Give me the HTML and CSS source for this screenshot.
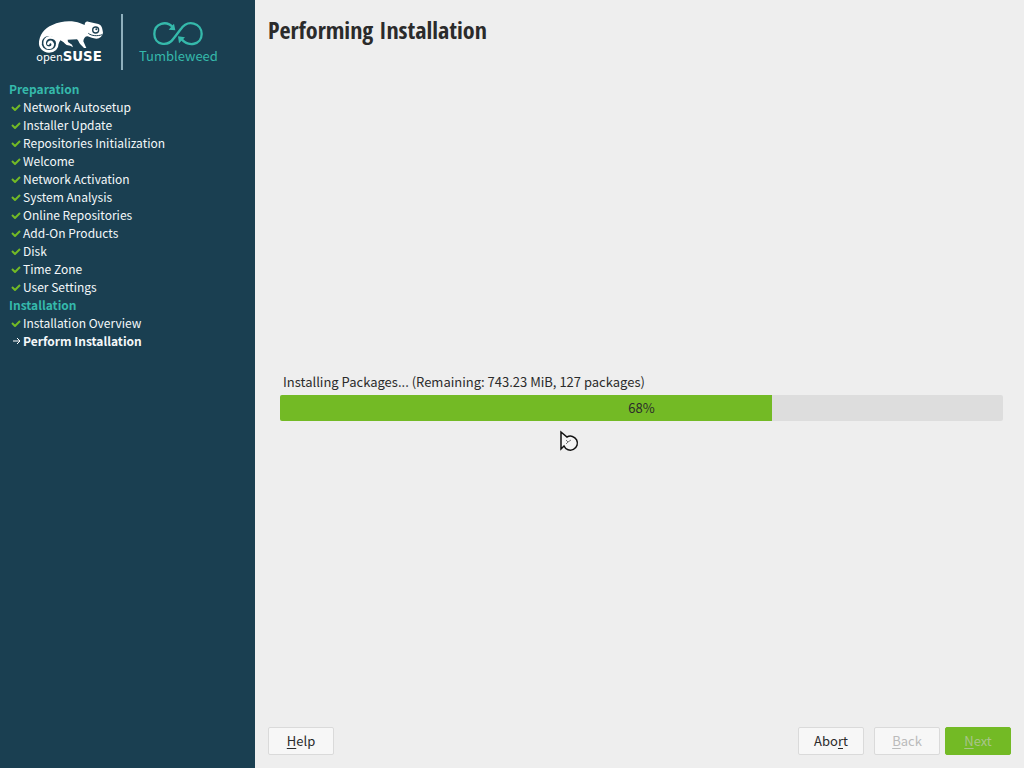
FILE: index.html
```html
<!DOCTYPE html>
<html lang="en">
<head>
  <meta charset="UTF-8" />
  <meta name="viewport" content="width=device-width, initial-scale=1.0"/>
  <title>Performing Installation</title>
  <link rel="stylesheet" href="styles.css">
</head>
<body>

  <!-- Sidebar -->
  <aside class="sidebar">
    <div class="logos">
      <svg class="logo-suse" viewBox="0 0 210 168" role="img" aria-label="openSUSE">
        <path class="suse-body" d="M12 82 C12 58 28 36 52 27 C78 15 110 12 136 22 L149 27 C149 20 153 15 160 17 L190 24 C199 27 202 34 204 50 C202 61 195 67 184 68 C174 68 166 64 158 61 C150 61 146 67 145 76 L154 96 L147 96 L136 85 C131 80 132 75 126 70 L98 71 L99 78 L111 86 L114 94 L106 89 L95 87 C88 82 84 76 76 73 L70 84 C66 66 52 60 40 60 C28 62 20 70 20 84 Z"/>
        <path class="suse-tail" d="M16 78 C14 94 26 106 42 106 C58 106 67 96 67 82 C67 70 56 63 44 64 C33 65 28 75 29 83 C30 93 38 96 45 95 C52 94 56 85 51 80 C47 76 41 78 40 83"/>
        <circle class="suse-eye" cx="182" cy="42" r="11"/>
        <circle class="suse-ring" cx="182" cy="42" r="7"/>
        <path class="suse-mouth" d="M160 52 C170 60 187 61 202 56"/>
        <circle class="suse-pupil" cx="184" cy="40" r="3"/>
        <text class="suse-name" x="4" y="134"><tspan class="thin">open</tspan><tspan class="bold">SUSE</tspan></text>
      </svg>
      <div class="product">
        <svg class="logo-loop" viewBox="0 0 150 76" aria-hidden="true">
          <path d="M61 19 C40 -5 4 6 4 38 C4 70 43 79 63 50 L83 24 C104 -8 146 5 146 38 C146 70 106 80 83 50"/>
          <path class="tip" d="M67 27 L47 25 L63 7 Z M75 45 L96 48 L78 66 Z"/>
        </svg>
        <span>Tumbleweed</span>
      </div>
    </div>

    <!-- Check mark and arrow used by the steps -->
    <svg class="symbols" aria-hidden="true">
      <symbol id="check" viewBox="0 0 10 8"><path d="M1 4 L4 7 L9 2"/></symbol>
      <symbol id="arrow" viewBox="0 0 10 8"><path d="M2 4 H8 M6 1 L9 4 L6 7"/></symbol>
    </svg>

    <h2>Preparation</h2>
    <ul class="steps">
      <li><svg><use href="#check"/></svg>Network Autosetup</li>
      <li><svg><use href="#check"/></svg>Installer Update</li>
      <li><svg><use href="#check"/></svg>Repositories Initialization</li>
      <li><svg><use href="#check"/></svg>Welcome</li>
      <li><svg><use href="#check"/></svg>Network Activation</li>
      <li><svg><use href="#check"/></svg>System Analysis</li>
      <li><svg><use href="#check"/></svg>Online Repositories</li>
      <li><svg><use href="#check"/></svg>Add-On Products</li>
      <li><svg><use href="#check"/></svg>Disk</li>
      <li><svg><use href="#check"/></svg>Time Zone</li>
      <li><svg><use href="#check"/></svg>User Settings</li>
    </ul>
    <h2>Installation</h2>
    <ul class="steps">
      <li><svg><use href="#check"/></svg>Installation Overview</li>
      <li class="current"><svg><use href="#arrow"/></svg>Perform Installation</li>
    </ul>
  </aside>

  <!-- Main area -->
  <main class="main">
    <h1>Performing Installation</h1>

    <section class="content">
      <div class="install-progress">
        <label for="progress">Installing Packages... (Remaining: 743.23 MiB, 127 packages)</label>
        <div class="bar">
          <progress id="progress" value="68" max="100"></progress>
          <span class="percent">68%</span>
        </div>
      </div>
    </section>

    <footer class="buttons">
      <button type="button" class="help"><u>H</u>elp</button>
      <button type="button" class="abort">Abo<u>r</u>t</button>
      <button type="button" class="back" disabled><u>B</u>ack</button>
      <button type="button" class="next" disabled><u>N</u>ext</button>
    </footer>
  </main>

  <!-- Busy pointer -->
  <svg class="pointer" viewBox="0 0 20 22" aria-hidden="true">
    <path d="M2 2 V19 L5 16 A7 7 0 1 0 8 7 Z"/>
    <path class="hand" d="M7 10 L9 12 L12 10 M7 14 L9 12"/>
  </svg>

</body>
</html>
```

FILE: styles.css
```css
/* Reset & Base */
* {
  box-sizing: border-box;
  margin: 0;
  padding: 0;
}

body {
  display: flex;
  min-height: 100vh;
  font-family: "Noto Sans CJK SC", "Open Sans", sans-serif;
  font-size: 13px;
  line-height: 18px;
  background-color: #eeeeee;
  color: #2b2b2b;
}

/* Sidebar */
.sidebar {
  flex: 0 0 255px;
  padding: 8px 9px;
  background-color: #1a3f51;
  color: #f4f8fa;
}

.logos {
  display: flex;
  height: 72px;
  padding-left: 26px;
}

.logo-suse {
  flex: none;
  width: 70px;
  height: 56px;
  margin-top: 8px;
}

.suse-body {
  fill: #ffffff;
}

.suse-tail {
  fill: none;
  stroke: #ffffff;
  stroke-width: 8;
  stroke-linecap: round;
}

.suse-eye,
.suse-pupil {
  fill: #1a3f51;
}

.suse-ring {
  fill: #ffffff;
}

.suse-mouth {
  fill: none;
  stroke: #1a3f51;
  stroke-width: 3;
}

.suse-name {
  font-size: 33px;
  fill: #ffffff;
}

.suse-name .bold {
  font-family: "DejaVu Sans", sans-serif;
  font-size: 40px;
  font-weight: bold;
}

.product {
  display: flex;
  flex-direction: column;
  align-items: center;
  height: 56px;
  margin: 6px 0 0 16px;
  padding: 7px 0 0 16px;
  border-left: 2px solid #8fb0bd;
  color: #35b9ab;
}

.logo-loop {
  flex: none;
  width: 50px;
  height: 26px;
  fill: none;
  stroke: #35b9ab;
  stroke-width: 7;
}

.logo-loop .tip {
  fill: #35b9ab;
  stroke: none;
}

.symbols {
  display: none;
}

.sidebar h2 {
  font-size: 12px;
  line-height: 18px;
  color: #35b9ab;
}

.steps {
  list-style: none;
  font-size: 12px;
}

.steps li {
  display: flex;
  align-items: center;
}

.steps svg {
  width: 10px;
  height: 8px;
  margin: 0 2px;
  fill: none;
  stroke: #73ba25;
  stroke-width: 2;
}

.steps .current {
  font-weight: bold;
}

.steps .current svg {
  stroke: #ffffff;
  stroke-width: 1;
}

/* Main area */
.main {
  flex: 1;
  display: flex;
  flex-direction: column;
  padding: 13px;
}

h1 {
  margin-bottom: 21px;
  font-family: "Open Sans Condensed", "Noto Sans Condensed", "Liberation Sans Narrow", "Noto Sans CJK SC", sans-serif;
  font-size: 24px;
  line-height: 33px;
}

.content {
  flex: 1;
  display: flex;
  align-items: center;
}

/* Progress */
.install-progress {
  flex: 1;
  margin: 0 8px 0 12px;
}

.install-progress label {
  display: block;
  margin: 0 3px 4px;
}

.bar {
  position: relative;
  height: 26px;
}

.bar progress {
  display: block;
  width: 100%;
  height: 100%;
  appearance: none;
  -webkit-appearance: none;
  border: none;
}

.bar progress::-webkit-progress-bar {
  background-color: #dddddd;
  border-radius: 2px;
}

.bar progress::-webkit-progress-value {
  background-color: #73ba25;
  border-radius: 2px 0 0 2px;
}

.percent {
  position: absolute;
  inset: 0;
  line-height: 26px;
  text-align: center;
}

/* Buttons */
.buttons {
  display: flex;
}

.buttons button {
  width: 66px;
  height: 28px;
  border: 1px solid #dadada;
  border-radius: 2px;
  background-color: #f7f7f7;
  font: inherit;
  color: #2b2b2b;
}

.buttons u {
  text-underline-offset: 2px;
}

.buttons .abort {
  margin-left: auto;
}

.buttons .back {
  margin: 0 5px 0 10px;
  color: #bbbbbb;
}

.buttons .next {
  border-color: #73ba25;
  background-color: #73ba25;
  color: #a9c48c;
}

/* Pointer */
.pointer {
  position: absolute;
  left: 559px;
  top: 430px;
  width: 20px;
  height: 22px;
  fill: #f4f4f4;
  stroke: #111111;
  stroke-width: 1.5;
}

.pointer .hand {
  fill: none;
  stroke: #777777;
  stroke-width: 1;
}
```
